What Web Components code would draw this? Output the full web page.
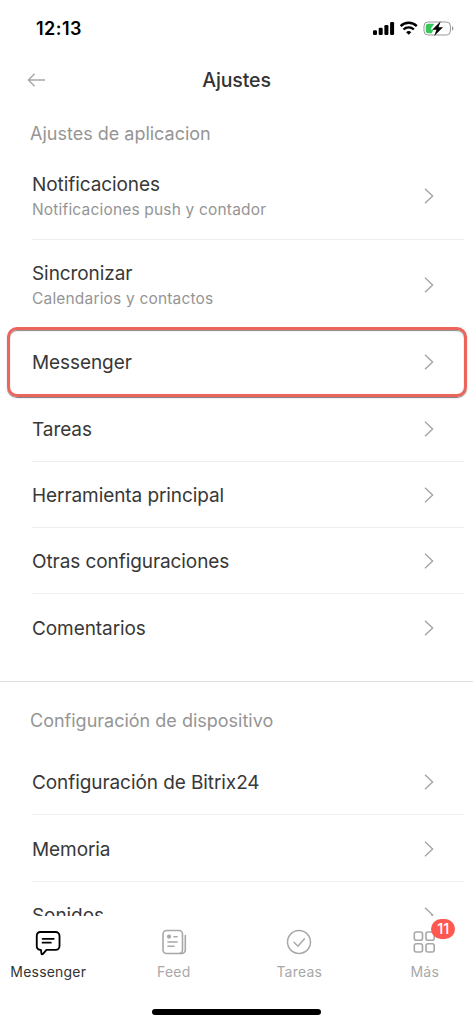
<!DOCTYPE html>
<html lang="es">
<head>
<meta charset="utf-8">
<title>Ajustes</title>
<style>
body{margin:0;background:#fff;font-family:Inter,"Liberation Sans",sans-serif;color:#383838}
</style>
</head>
<body>
<settings-app></settings-app>
<script>
const define=(name,html)=>{
  const t=document.createElement('template');
  t.innerHTML=html;
  customElements.define(name,class extends HTMLElement{
    constructor(){super();this.attachShadow({mode:'open'}).append(t.content.cloneNode(true));}
  });
};

define('status-bar',`<style>
:host{display:flex;height:57px;box-sizing:border-box;padding:0 19px 0 36px;justify-content:space-between;align-items:center;color:#000}
time{font-size:18px;font-weight:600;letter-spacing:.45px;line-height:22px}
svg{display:block;margin-bottom:1px}
</style><time>12:13</time>
<svg width="82" height="18" viewBox="0 0 82 18">
<rect x="1" y="11.3" width="4" height="4.7" rx="1.2"/><rect x="6.7" y="8.800" width="4" height="7.2" rx="1.2"/><rect x="12.4" y="6" width="4" height="10" rx="1.2"/><rect x="18.1" y="3" width="4" height="13" rx="1.2"/>
<g fill="none" stroke="#000" stroke-width="2.4"><path d="M28.6 7.1a11.6 11.6 0 0 1 16.2 0"/><path d="M31.5 10.5a7.4 7.4 0 0 1 10.4 0"/></g><path d="M36.7 15.8l-2.6-2.6a3.8 3.8 0 0 1 5.2 0z"/>
<rect x="52" y="3" width="26.4" height="13" rx="4" fill="none" stroke="#999"/><path d="M80 7.3c1.8.5 1.8 3.9 0 4.4z" fill="#999"/>
<path d="M56.3 4.7h6l-3.2 4.6v1.4h2.1l-1.3 3.6h-3.6a2.5 2.5 0 0 1-2.500-2.500V7.2a2.500 2.500 0 0 1 2.500-2.500z" fill="#35c759"/>
<path d="M68.7 2.200l-8.500 8.500h4.300l-2.300 6.300 8.800-8.700h-4.500z" fill="#000"/>
</svg>`);

define('nav-header',`<style>
:host{display:grid;grid-template-columns:46px 1fr 46px;height:48px;box-sizing:border-box;align-items:center;padding-bottom:2px}
h1{margin:0;text-align:center;font-size:19.5px;font-weight:500;letter-spacing:-.1px;line-height:24px;color:#333}
svg{display:block;margin-left:27px}
</style><svg width="19" height="16" viewBox="0 0 19 16" fill="none" stroke="#a8a8a8" stroke-width="1.4"><path d="M18 8H1.6M7.6 1.8L1.4 8l6.2 6.2"/></svg><h1><slot></slot></h1>`);

define('section-title',`<style>
:host{display:block;padding-left:30px;font-size:18px;line-height:24px;color:#959595}
</style><slot></slot>`);

define('settings-row',`<style>
:host{display:flex;box-sizing:border-box;height:66.35px;margin:0 9px 0 32px;border-bottom:1px solid #eee;align-items:center;justify-content:space-between;padding-right:29.500px}
:host([tall]){height:89px}
:host([last]){border-color:transparent}
:host([marked]){position:relative;border-color:transparent}
:host([marked])::after{content:"";position:absolute;left:-25px;right:-3px;top:-2px;height:64px;border:3px solid #ec655c;border-radius:10px;box-shadow:0 1px 1px #777,inset 0 1px 1px #888}
.t{font-size:19px;line-height:24px;letter-spacing:-.08px}
.s{display:none;font-size:15.5px;line-height:20px;color:#959595;margin-top:3px;letter-spacing:.18px}
:host([tall]) .s{display:block}
.x{padding-top:3px}
svg{display:block;flex:none;padding-top:1px}
</style><div class="x"><div class="t"><slot></slot></div><div class="s"><slot name="sub"></slot></div></div>
<svg width="12" height="18" viewBox="0 0 12 18" fill="none" stroke="#a5a5a5" stroke-width="1.4"><path d="M2 1.8L9.6 9 2 16.2"/></svg>`);

define('tab-item',`<style>
:host{display:flex;flex-direction:column;align-items:center;width:125.5px;color:#a8a8a8;font-size:14px;line-height:18px;letter-spacing:.2px}
:host([active]){color:#333}
.i{position:relative;width:30px;height:30px;margin-bottom:6px}
::slotted(b){position:absolute;left:21.5px;top:-8px;width:24px;height:20px;border-radius:10px;background:#ff5752;color:#fff;font-size:14.5px;font-weight:500;line-height:20px;text-align:center;letter-spacing:0}
</style><div class="i"><slot name="icon"></slot><slot name="badge"></slot></div><slot></slot>`);

define('tab-bar',`<style>
:host{display:flex;flex-direction:column;align-items:center;height:108px;background:#fff}
nav{display:flex;width:502px;padding-top:11px;height:82px}
i{display:block;width:169px;height:6px;border-radius:3px;background:#000}
</style><nav><slot></slot></nav><i></i>`);

define('settings-app',`<style>
:host{display:flex;flex-direction:column;height:1024px;width:473px;overflow:hidden}
main{height:811px;overflow:hidden;flex:none}
section{padding-top:17px}
section+section{margin-top:20.3px;border-top:1px solid #dedede;padding-top:27px}
section+section section-title{margin-bottom:16px}
section-title{margin-bottom:5px}
</style>
<status-bar></status-bar><nav-header>Ajustes</nav-header>
<main>
<section><section-title>Ajustes de aplicacion</section-title>
<settings-row tall>Notificaciones<span slot="sub">Notificaciones push y contador</span></settings-row>
<settings-row tall last>Sincronizar<span slot="sub">Calendarios y contactos</span></settings-row>
<settings-row marked>Messenger</settings-row>
<settings-row>Tareas</settings-row>
<settings-row>Herramienta principal</settings-row>
<settings-row>Otras configuraciones</settings-row>
<settings-row last>Comentarios</settings-row></section>
<section><section-title>Configuración de dispositivo</section-title>
<settings-row>Configuración de Bitrix24</settings-row>
<settings-row>Memoria</settings-row>
<settings-row>Sonidos</settings-row></section>
</main>
<tab-bar>
<tab-item active>Messenger<svg slot="icon" width="30" height="30" viewBox="-.4 -.2 31 31" fill="none" stroke="#000" stroke-width="1.9" stroke-linecap="round" stroke-linejoin="round"><path d="M7 5h16a4 4 0 0 1 4 4v10.500a4 4 0 0 1-4 4H13.500L10 27.500q-1.500 1.300-1.700-.5L7.800 23.500H7a3.500 3.500 0 0 1-3.500-3.500V8.500A3.500 3.500 0 0 1 7 5z"/><path d="M9.500 12h11.500M9.500 16h8.500"/></svg></tab-item>
<tab-item>Feed<svg slot="icon" width="30" height="30" viewBox="0 0 30 30" fill="none" stroke="#a8a8a8" stroke-width="1.6" stroke-linecap="round"><rect x="4" y="3.500" width="19.500" height="23" rx="3.500"/><path d="M26.300 8.500V23a3.500 3.500 0 0 1-3.500 3.500h-2M15 9.700h3M9 15h9M9 19.300h6"/><circle cx="10" cy="9.700" r="2.100" fill="#a8a8a8" stroke="none"/></svg></tab-item>
<tab-item>Tareas<svg slot="icon" width="30" height="30" viewBox="0 0 30 30" fill="none" stroke="#a8a8a8" stroke-width="1.500" stroke-linecap="round"><circle cx="15" cy="15" r="11.500"/><path d="M10 15.200l4 4 6.300-7.300"/></svg></tab-item>
<tab-item>Más<svg slot="icon" width="30" height="30" viewBox="0 0 30 30" fill="none" stroke="#a8a8a8" stroke-width="1.600"><rect x="4.300" y="5" width="8.200" height="8.200" rx="2"/><rect x="16" y="5" width="8.200" height="8.200" rx="2"/><rect x="4.300" y="16.800" width="8.200" height="8.200" rx="2"/><rect x="16" y="16.800" width="8.200" height="8.200" rx="2"/></svg><b slot="badge">11</b></tab-item>
</tab-bar>`);
</script>
</body>
</html>
